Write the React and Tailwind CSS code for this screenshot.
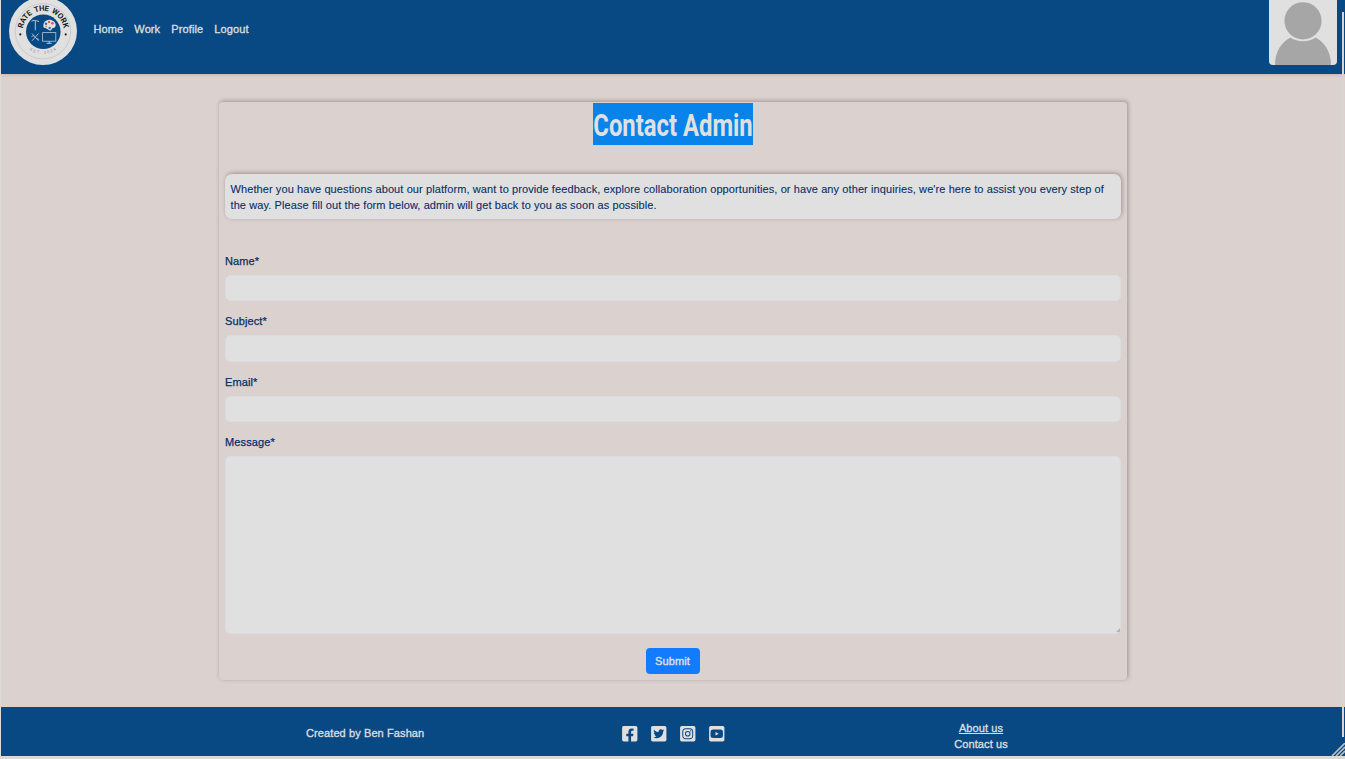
import React from "react";
import { FaFacebookSquare, FaTwitterSquare, FaInstagramSquare, FaYoutubeSquare } from "react-icons/fa";

function Logo() {
  return (
    <svg viewBox="0 0 68 68" className="mt-[-3px] h-[68px] w-[68px] shrink-0">
      <defs>
        <path id="logo-top" d="M13.700 34.500a20.600 20.600 0 0 1 41.200 0" />
        <path id="logo-bottom" d="M11 34a23 23 0 0 0 46 0" />
      </defs>
      <circle cx="34" cy="34" r="34" fill="#e0e0e0" />
      <circle cx="34" cy="34.3" r="27.7" fill="none" stroke="#b3b5b8" strokeWidth=".5" />
      <circle cx="34.3" cy="34.7" r="17.3" fill="#084983" />
      <text fontFamily="Roboto, sans-serif" fontWeight="700" fontSize="7.7" wordSpacing="1.5" fill="#1b1e22" textAnchor="middle">
        <textPath href="#logo-top" startOffset="50%" textLength="58">RATE THE WORK</textPath>
      </text>
      <text fontFamily="Roboto, sans-serif" fontSize="4" fill="#8c8e91" textAnchor="middle">
        <textPath href="#logo-bottom" startOffset="50%" textLength="28">EST. 2024</textPath>
      </text>
      <circle cx="11.3" cy="37.4" r="1.1" fill="#22262b" />
      <circle cx="56.7" cy="37.4" r="1.1" fill="#22262b" />
      <g fill="none" stroke="#b9c5d2" strokeWidth="1">
        <path d="M22.500 24.300c2-1.400 4-.9 7.500.2M26.300 24v9.300" />
        <path d="M23 36.500l6.500 7.300M29.500 36.500l-6.500 7.300M22.500 39.500l2.500-1M27.800 41.500l2 1" strokeWidth=".9" />
        <rect x="33.600" y="35.600" width="13.200" height="8.600" strokeWidth=".8" />
        <path d="M40.200 44.200v2M37.600 46.300h5.200" />
      </g>
      <g transform="translate(-1.500 3.500)">
        <path d="M40.8 19.4c3.6-.5 7.500 2 7.400 5.2-.1 2.3-1.2 2.800-2.5 2.800-1.8 0-1.200 2.400-3 2.600-2 .2-3-2-5-2.400-1.800-.4-2-1.300-1.800-3.200.3-2.800 2-4.600 4.900-5z" fill="#e4e0e2" />
        <circle cx="38.5" cy="23.2" r="1.2" fill="#3767ba" />
        <circle cx="41.6" cy="21.4" r="1.2" fill="#df6049" />
        <circle cx="45" cy="22.8" r="1.2" fill="#d64855" />
        <circle cx="38.600" cy="26.1" r="1" fill="#e58462" />
        <circle cx="42.2" cy="27.5" r="1.2" fill="#3767ba" />
      </g>
    </svg>
  );
}

function Avatar() {
  return (
    <svg viewBox="0 0 68 65" className="mr-2 h-[65px] w-[68px] rounded-b-[4px] bg-[#e0e0e0]">
      <path d="M6 65c0-14.5 7.5-23.500 15.500-27.500 7 5 18 5 25 0 8 4 15.500 13 15.500 27.500z" fill="#a6a6a6" />
      <circle cx="34" cy="20.800" r="19.600" fill="#e0e0e0" />
      <circle cx="34" cy="20.800" r="18.600" fill="#a6a6a6" />
    </svg>
  );
}

function Field({ label, area }) {
  return (
    <label className="block">
      <span className="ml-[0.5px] block h-4 leading-4 tracking-[0.12px] [-webkit-text-stroke:0.25px_currentColor]">{label}</span>
      {area ? (
        <span className="relative mt-1.5 block">
          <textarea className="block h-[178px] w-full resize-none rounded-[5px] border border-[#d9dce0] bg-[#e0e0e0] outline-none" />
          <svg className="absolute bottom-[2px] right-[1px] h-1 w-1" viewBox="0 0 4 4">
            <path d="M4 0v4H0z" fill="#b4b4b4" />
          </svg>
        </span>
      ) : (
        <input className="mt-1.5 block h-[26.400px] w-full rounded-[5px] border border-[#d9dce0] bg-[#e0e0e0] outline-none" />
      )}
    </label>
  );
}

export default function App() {
  return (
    <div className="relative flex h-[759px] w-[1345px] flex-col overflow-hidden border-b-[3px] border-l border-[#dadada] bg-[#dbd1cf] font-['Liberation_Sans',Arial,sans-serif] text-[11px] text-[#092e6a] [-webkit-text-stroke:0.1px_currentColor]">
      <header className="flex h-[74px] shrink-0 items-start bg-[#084983] pl-2 text-[#dcdcdc] shadow-[0_1px_3px_rgba(90,50,50,0.18)]">
        <Logo />
        <nav className="ml-[16.500px] mt-[21px] flex flex-1 gap-[11.100px] leading-4 tracking-[0.1px] [-webkit-text-stroke:0.35px_currentColor]">
          <a>Home</a>
          <a>Work</a>
          <a>Profile</a>
          <a>Logout</a>
        </nav>
        <Avatar />
      </header>

      <main className="flex flex-1 justify-center pt-7">
        <section className="mr-px h-[578px] w-[908px] rounded-[4px] px-[6px] shadow-[1px_-1px_4px_rgba(80,60,60,0.42)]">
          <div className="flex justify-center pt-px">
            <h1 className="flex h-[42px] w-[160px] justify-center bg-[#0783ea] font-[Roboto,sans-serif] text-[32px] font-bold leading-[45px] text-[#e0e0e0] [-webkit-text-stroke:0]">
              <span className="inline-block scale-x-[0.745] whitespace-nowrap">Contact Admin</span>
            </h1>
          </div>
          <p className="mt-[29px] h-[45px] whitespace-nowrap rounded-[7px] bg-[#e0e0e0] pl-[6px] pt-[7px] leading-4 tracking-[0.093px] shadow-[1px_-1px_4px_rgba(80,60,60,0.42)]">
            Whether you have questions about our platform, want to provide feedback, explore collaboration opportunities, or have any other inquiries, we're here to assist you every step of
            <br />
            the way. Please fill out the form below, admin will get back to you as soon as possible.
          </p>
          <form className="mt-[34px] flex flex-col gap-3" onSubmit={(e) => e.preventDefault()}>
            <Field label="Name*" />
            <Field label="Subject*" />
            <Field label="Email*" />
            <Field label="Message*" area />
            <button className="mt-0.5 h-[26px] w-[54px] self-center rounded-[4px] bg-[#127bff] tracking-[0.15px] text-[#e0e0e0] [-webkit-text-stroke:0.35px_currentColor]">Submit</button>
          </form>
        </section>
      </main>

      <footer className="grid h-[49px] shrink-0 grid-cols-[728px_auto] bg-[#084983] text-[#dcdcdc] [-webkit-text-stroke:0.35px_currentColor]">
        <div className="flex items-start justify-between pl-[305px] pr-[4.500px]">
          <p className="mt-[18px] leading-4 tracking-[0.1px]">Created by Ben Fashan</p>
          <div className="mt-[18px] flex gap-[13.500px] text-[#e0e0e0]">
            <FaFacebookSquare className="h-[17.500px] w-[15.500px]" />
            <FaTwitterSquare className="h-[17.500px] w-[15.500px]" />
            <FaInstagramSquare className="h-[17.500px] w-[15.500px]" />
            <FaYoutubeSquare className="h-[17.500px] w-[15.500px]" />
          </div>
        </div>
        <div className="mt-[13px] flex w-[504px] flex-col items-center leading-4 tracking-[0.1px]">
          <a className="underline underline-offset-1">About us</a>
          <a>Contact us</a>
        </div>
      </footer>

      <div className="absolute right-px top-[12px] h-[725px] w-[2px] bg-[#d6d4d6]" />
      <svg className="absolute bottom-0 right-0 h-[13px] w-[14px]" viewBox="0 0 14 13" stroke="#c0c0c0" strokeWidth="1.6">
        <path d="M1 13L14 0M5 13L14 4M9 13L14 8" />
      </svg>
    </div>
  );
}
